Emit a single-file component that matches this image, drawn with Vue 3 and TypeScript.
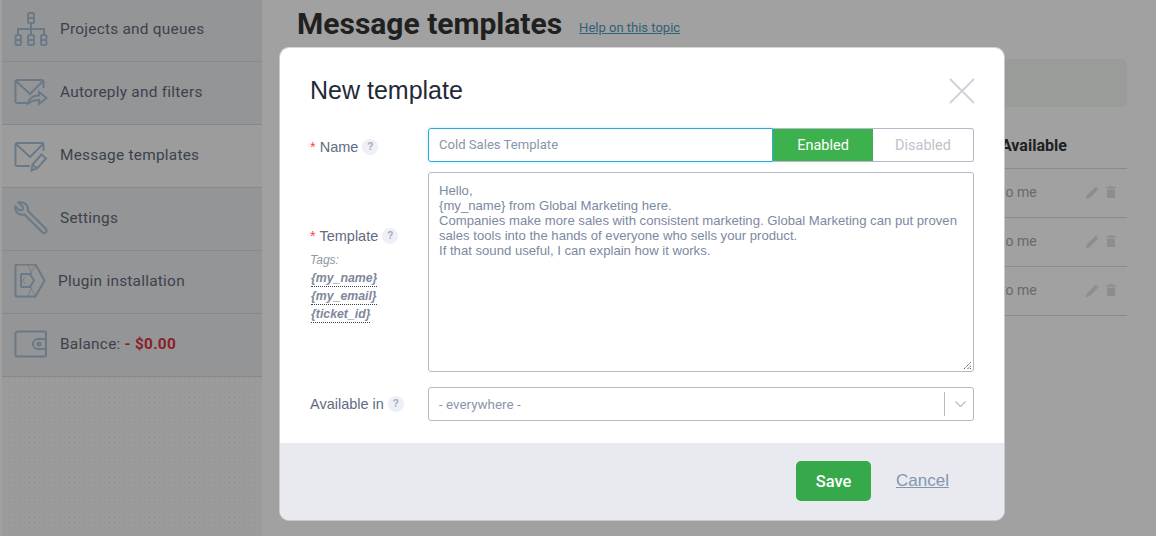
<script setup lang="ts">
const rows = [1, 2, 3]
const tags = ['{my_name}', '{my_email}', '{ticket_id}']
</script>

<template>
  <div class="page">
    <aside class="sidebar">
      <nav class="menu">
        <a class="item">
          <svg class="icon" viewBox="0 0 34 34" fill="none">
            <path d="M17 12v5M4 23v-6h26v6M17 17v6" />
            <rect x="14" y="1" width="6" height="5" rx="1.5" /><rect x="14" y="6" width="6" height="5" rx="1.5" />
            <rect x="1.5" y="23" width="5.500" height="5" rx="1.500" /><rect x="1.500" y="28" width="5.500" height="5" rx="1.500" />
            <rect x="14" y="23" width="6" height="5" rx="1.500" /><rect x="14" y="28" width="6" height="5" rx="1.500" />
            <rect x="27" y="23" width="5.500" height="5" rx="1.500" /><rect x="27" y="28" width="5.500" height="5" rx="1.500" />
          </svg>
          <span>Projects and queues</span>
        </a>
        <a class="item">
          <svg class="icon" viewBox="0 0 34 34" fill="none">
            <path d="M16 28H3a1.500 1.500 0 0 1-1.500-1.500V6.500A1.500 1.500 0 0 1 3 5h25a1.500 1.500 0 0 1 1.500 1.500V13" />
            <path d="M2 6l14 13 13-13" />
            <path d="M14 28.500c1-5 5-8 11-8v-3.500l7.500 6-7.500 6V25c-4 0-8 1-11 3.500z" />
          </svg>
          <span>Autoreply and filters</span>
        </a>
        <a class="item active">
          <svg class="icon" viewBox="0 0 34 34" fill="none">
            <path d="M16 28H3a1.500 1.500 0 0 1-1.500-1.500V6.500A1.500 1.500 0 0 1 3 5h25a1.500 1.500 0 0 1 1.500 1.500V13" />
            <path d="M2 6l14 13 13-13" />
            <path d="M17.500 32.500l1-6 9-10 4.500 4-9 10zM18.500 26.500l4.500 4" />
          </svg>
          <span>Message templates</span>
        </a>
        <a class="item">
          <svg class="icon" viewBox="0 0 34 34" fill="none">
            <path d="M4.500 1.500L9 6l-.5 3-3 .5L1.500 5.500C.500 10 4 15 10.500 13.500L28 31c3 3 6-.5 3.500-3.500L14 10C15 4 10 0 4.500 1.500z" />
          </svg>
          <span>Settings</span>
        </a>
        <a class="item plugin">
          <svg class="icon" viewBox="0 0 34 34" fill="none">
            <path d="M3 .5h18.500L30.500 16.500 21.500 32.500H3A1.500 1.500 0 0 1 1.500 31V2A1.500 1.500 0 0 1 3 .5z" />
            <path d="M8 10h8l4 6.500-4 6.500H8a1 1 0 0 1-1-1V11a1 1 0 0 1 1-1z" />
            <path class="thin" d="M14 1l4 9M22 1l-6 9M14 32l4-9M22 32l-6-9M11 13l-2 3.500 2 3.500" />
          </svg>
          <span>Plugin installation</span>
        </a>
        <a class="item">
          <svg class="icon" viewBox="0 0 34 34" fill="none">
            <path d="M3.500 4.500h27a1.500 1.500 0 0 1 1.500 1.500v22a1.500 1.500 0 0 1-1.500 1.500h-27A2 2 0 0 1 1.500 27.500V6.500a2 2 0 0 1 2-2z" />
            <path d="M32 12h-8a5 5 0 0 0 0 10h8" />
            <circle cx="25" cy="17" r="1.500" />
          </svg>
          <span>Balance: <b class="debt">- $0.00</b></span>
        </a>
      </nav>
    </aside>

    <main class="content">
      <header class="head">
        <h1>Message templates</h1>
        <a class="help">Help on this topic</a>
      </header>
      <div class="notice"></div>
      <div class="table">
        <div class="thead"><span class="col">Available</span></div>
        <div v-for="r in rows" :key="r" class="trow">
          <span class="col">to me</span>
          <span class="acts">
            <svg width="13" height="13" viewBox="0 0 13 13"><path d="M0 13l.8-3.500L9.500.8l2.700 2.700-8.700 8.700zM10.200.2l.5-.2 2.300 2.300-.2.500z" /></svg>
            <svg width="10" height="12" viewBox="0 0 10 12"><path d="M0 1h3l.5-1h3l.5 1h3v1.500H0zM1 3.500h8V12H1z" /></svg>
          </span>
        </div>
      </div>
    </main>

    <div class="overlay"></div>

    <section class="modal">
      <div class="body">
        <h2>New template</h2>
        <svg class="close" width="26" height="26" viewBox="0 0 26 26"><path d="M1 1l24 24M25 1L1 25" /></svg>

        <div class="form-row name-row">
          <label class="field-label name-label"><i class="req">*</i> Name<em class="q">?</em></label>
          <div class="name-fields">
            <div class="input focus">Cold Sales Template</div>
            <div class="toggle">
              <span class="on">Enabled</span>
              <span class="off">Disabled</span>
            </div>
          </div>
        </div>

        <div class="form-row tpl-row">
          <div class="tpl-label">
            <label class="field-label"><i class="req">*</i> Template<em class="q">?</em></label>
            <div class="tags-title">Tags:</div>
            <a v-for="t in tags" :key="t" class="tag">{{ t }}</a>
          </div>
          <div class="textarea">
            <p>Hello,</p>
            <p>{my_name} from Global Marketing here.</p>
            <p>Companies make more sales with consistent marketing. Global Marketing can put proven</p>
            <p>sales tools into the hands of everyone who sells your product.</p>
            <p>If that sound useful, I can explain how it works.</p>
            <svg class="grip" width="9" height="9" viewBox="0 0 9 9"><path d="M1 8l7-7M4.500 8L8 4.500M7 8l1-1" /></svg>
          </div>
        </div>

        <div class="form-row avail-row">
          <label class="field-label avail-label">Available in<em class="q">?</em></label>
          <div class="select">
            <span class="val">- everywhere -</span>
            <span class="divider"></span>
            <svg class="chev" width="11" height="6" viewBox="0 0 11 6"><path d="M.5.5l5 5 5-5" /></svg>
          </div>
        </div>
      </div>
      <footer class="foot">
        <button class="save" type="button">Save</button>
        <a class="cancel">Cancel</a>
      </footer>
    </section>
  </div>
</template>

<style>
html, body { margin: 0; background: #fff; overflow: hidden; }
</style>

<style scoped>
.page {
  position: relative;
  display: flex;
  width: 1156px;
  height: 536px;
  overflow: hidden;
  font-family: Roboto, sans-serif;
  background: #fff;
}
.sidebar {
  width: 260px;
  margin-left: 2px;
  flex: none;
  background-color: #f6f6f6;
  background-image: radial-gradient(circle, #e4e4e4 .7px, transparent 1px);
  background-size: 5px 5px;
}
.menu { margin-top: -1px; }
.item {
  display: flex;
  align-items: center;
  box-sizing: border-box;
  height: 63px;
  padding: 0 0 2px 12px;
  gap: 12px;
  background: #ebedee;
  border-bottom: 1px solid #d8dadd;
  color: #5f697b;
  font-size: 15.400px;
  letter-spacing: .25px;
}
.item.active { background: #f8f8f8; box-shadow: 0 -1px 0 #d3d5da; }
.item.plugin { gap: 10px; }
.icon { width: 34px; height: 34px; flex: none; stroke: #aac0d6; stroke-width: 2; }
.icon .thin { stroke-width: .8; }
.debt { color: #d9333f; font-weight: 700; }

.content { flex: 1; padding: 0 29px 0 35px; min-width: 0; }
.head { display: flex; align-items: baseline; height: 59px; gap: 17px; }
h1 { margin: 4px 0 0; font-size: 30px; line-height: 40px; font-weight: 700; color: #333; }
.help { position: relative; top: -2px; font-size: 13px; color: #5099be; text-decoration: underline; }
.notice { height: 48px; background: #f2f8f2; border-radius: 6px; }
.thead, .trow {
  display: flex;
  align-items: center;
  box-sizing: border-box;
  padding: 0 0 2px 704px;
  height: 49px;
  border-bottom: 1px solid #dcdcdc;
  font-size: 14px;
}
.thead { padding-top: 16px; padding-bottom: 0; height: 62px; font-size: 16px; font-weight: 700; color: #333; }
.col { width: 85px; }
.trow { color: #a8a8a8; }
.acts { display: flex; gap: 7px; align-items: center; }
.acts svg { fill: #dfdfdf; }

.overlay { position: absolute; inset: 0; background: rgba(0, 0, 0, .37); }
.modal {
  position: absolute;
  left: 279px;
  top: 47px;
  width: 726px;
  height: 474px;
  display: flex;
  flex-direction: column;
  box-sizing: border-box;
  background: #fff;
  border-radius: 10px;
  overflow: hidden;
  border: 1px solid #c6c8cc;
  border-top-color: #d5d5d5;
  font-family: "Liberation Sans", Arial, sans-serif;
}
.body { position: relative; flex: 1; padding: 0 30px; }
h2 { margin: 26px 0 22px; font-size: 25px; line-height: 32px; font-weight: 400; color: #1f2a37; }
.close { position: absolute; top: 30px; right: 29px; stroke: #cfd2da; stroke-width: 2; fill: none; }
.form-row { display: grid; grid-template-columns: 118px 546px; }
.field-label { font-size: 14.500px; color: #5f6b80; display: flex; align-items: center; white-space: pre; padding-top: 2px; }
.name-label { padding-top: 4px; }
.avail-label { padding-top: 0; }
.req { color: #f44; font-style: normal; }
.q {
  width: 16px; height: 16px; border-radius: 50%; background: #eef0f7; color: #a5aab8;
  font: 700 10px/16px "Liberation Sans", sans-serif; text-align: center; margin-left: 4px;
}
.name-row { height: 34px; }
.name-fields { display: flex; }
.input {
  width: 345px; box-sizing: border-box; height: 34px; padding: 0 10px;
  border: 1px solid #29abe2; border-radius: 3px 0 0 3px; font: 13.100px/31px Roboto, sans-serif; color: #8995a9;
  box-shadow: 0 0 3px rgba(41, 171, 226, .35);
}
.toggle {
  flex: 1; display: flex; box-sizing: border-box; height: 34px; border: 1px solid #b4bac6; border-left: 0;
  border-radius: 0 3px 3px 0; overflow: hidden; font: 14.500px/33px Roboto, sans-serif; text-align: center;
}
.on { width: 100px; background: #3cb14e; color: #fff; }
.off { flex: 1; color: #bfc2ca; }
.tpl-row { margin-top: 10px; height: 200px; }
.tpl-label { display: flex; flex-direction: column; align-items: flex-start; padding-top: 54px; }
.tags-title { margin-top: 7px; font-size: 12px; line-height: 18px; font-style: italic; color: #8f97a7; }
.tag {
  font: italic 700 12.300px/15px "Liberation Sans", sans-serif; color: #7d889c; margin-left: 1px;
  border-bottom: 1px dotted #3b4250; margin-bottom: 2.200px; position: relative; top: 2px;
}
.textarea {
  position: relative; box-sizing: border-box; height: 200px; padding: 9.500px 10px 10px; border: 1px solid #b4bac6;
  border-radius: 3px; font: 13.140px/15.200px "Liberation Sans", sans-serif; color: #7c89a2;
}
.textarea p { margin: 0; white-space: nowrap; }
.grip { position: absolute; right: 1px; bottom: 1px; stroke: #555; stroke-width: 1; stroke-dasharray: 1.500 .5; fill: none; }
.avail-row { margin-top: 15px; height: 34px; }
.select {
  display: flex; align-items: center; box-sizing: border-box; height: 34px; padding-left: 10px;
  border: 1px solid #b4bac6; border-radius: 3px; font: 13.400px Roboto, sans-serif; color: #8995a9;
}
.val { flex: 1; }
.divider { width: 1px; height: 24px; background: #b4bac6; }
.chev { margin: 0 7px 0 10px; stroke: #b4bac6; stroke-width: 1.200; fill: none; }
.foot {
  height: 77px; flex: none; display: flex; align-items: center; padding-left: 516px; gap: 25px;
  background: #e9eaef;
}
.save {
  width: 75px; height: 40px; border: 0; border-radius: 5px; background: #36a94a; color: #fff;
  font: 500 16.500px Roboto, sans-serif; margin-top: -1px;
}
.cancel { font-size: 17px; color: #8296b0; text-decoration: underline; margin-top: -1px; }
</style>
